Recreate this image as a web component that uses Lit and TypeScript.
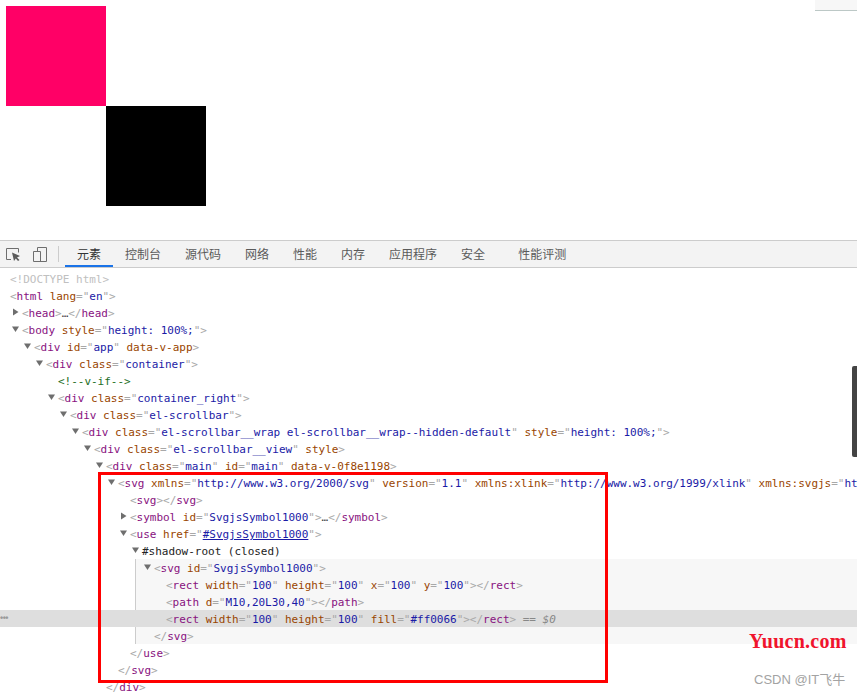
import { LitElement, html, css, nothing } from "lit";
import { customElement } from "lit/decorators.js";

type Attr = [string, string?, boolean?];
interface Row {
  level: number;
  arrow?: "open" | "closed";
  body: unknown;
}

const b = (s: string) => html`<span class="br">${s}</span>`;
const n = (s: string) => html`<span class="tag">${s}</span>`;
const attrs = (list: Attr[]) =>
  list.map(
    ([k, v, link]) => html` <span class="an">${k}</span>${v === undefined
        ? nothing
        : html`<span class="br">="</span><span class="av ${link ? "link" : ""}">${v}</span><span class="br">"</span>`}`
  );
const open = (name: string, list: Attr[] = []) => html`${b("<")}${n(name)}${attrs(list)}${b(">")}`;
const close = (name: string) => html`${b("</")}${n(name)}${b(">")}`;

const TABS = ["元素", "控制台", "源代码", "网络", "性能", "内存", "应用程序", "安全", "性能评测"];

const TOP: Row[] = [
  { level: 0, body: html`<span class="doctype">&lt;!DOCTYPE html&gt;</span>` },
  { level: 0, body: open("html", [["lang", "en"]]) },
  { level: 1, arrow: "closed", body: html`${open("head")}<span class="ell">…</span>${close("head")}` },
  { level: 1, arrow: "open", body: open("body", [["style", "height: 100%;"]]) },
  { level: 2, arrow: "open", body: open("div", [["id", "app"], ["data-v-app"]]) },
  { level: 3, arrow: "open", body: open("div", [["class", "container"]]) },
  { level: 4, body: html`<span class="comment">&lt;!--v-if--&gt;</span>` },
  { level: 4, arrow: "open", body: open("div", [["class", "container_right"]]) },
  { level: 5, arrow: "open", body: open("div", [["class", "el-scrollbar"]]) },
  {
    level: 6,
    arrow: "open",
    body: open("div", [
      ["class", "el-scrollbar__wrap el-scrollbar__wrap--hidden-default"],
      ["style", "height: 100%;"],
    ]),
  },
  { level: 7, arrow: "open", body: open("div", [["class", "el-scrollbar__view"], ["style"]]) },
  { level: 8, arrow: "open", body: open("div", [["class", "main"], ["id", "main"], ["data-v-0f8e1198"]]) },
  {
    level: 9,
    arrow: "open",
    body: html`${b("<")}${n("svg")}${attrs([
      ["xmlns", "http://www.w3.org/2000/svg"],
      ["version", "1.1"],
      ["xmlns:xlink", "http://www.w3.org/1999/xlink"],
    ])} <span class="an">xmlns:svgjs</span>${b('="')}<span class="av">ht</span>`,
  },
  { level: 10, body: html`${open("svg")}${close("svg")}` },
  {
    level: 10,
    arrow: "closed",
    body: html`${open("symbol", [["id", "SvgjsSymbol1000"]])}<span class="ell">…</span>${close("symbol")}`,
  },
  { level: 10, arrow: "open", body: open("use", [["href", "#SvgjsSymbol1000", true]]) },
  { level: 11, arrow: "open", body: html`<span class="shadow-label">#shadow-root (closed)</span>` },
];

const SHADOW: (Row & { selected?: boolean })[] = [
  { level: 12, arrow: "open", body: open("svg", [["id", "SvgjsSymbol1000"]]) },
  {
    level: 13,
    body: html`${open("rect", [["width", "100"], ["height", "100"], ["x", "100"], ["y", "100"]])}${close("rect")}`,
  },
  { level: 13, body: html`${open("path", [["d", "M10,20L30,40"]])}${close("path")}` },
  {
    level: 13,
    selected: true,
    body: html`${open("rect", [["width", "100"], ["height", "100"], ["fill", "#ff0066"]])}${close(
      "rect"
    )}<span class="eq"> == <i>$0</i></span>`,
  },
  { level: 12, body: close("svg") },
];

const BOTTOM: Row[] = [
  { level: 10, body: close("use") },
  { level: 9, body: close("svg") },
  { level: 8, body: close("div") },
];

const SHADOW_LEFT = 136;

@customElement("app-root")
export class AppRoot extends LitElement {
  static styles = css`
    :host {
      display: block;
      position: relative;
      width: 859px;
      height: 695px;
      overflow: hidden;
      background: #fff;
    }
    .page {
      width: 857px;
    }
    .preview {
      height: 240px;
      display: flex;
      justify-content: space-between;
      align-items: flex-start;
    }
    .canvas {
      display: block;
      margin: 6px 0 0 6px;
    }
    .corner {
      width: 42px;
      height: 10px;
      background: #f7f7f7;
      border-bottom: 1px solid #bcc8c6;
    }
    .toolbar {
      box-sizing: border-box;
      height: 28px;
      display: flex;
      align-items: stretch;
      background: #f3f3f3;
      border-top: 1px solid #ccc;
      border-bottom: 1px solid #ccc;
    }
    .tool {
      display: block;
      flex: none;
      align-self: center;
    }
    .t1 {
      margin-left: 5px;
    }
    .t2 {
      margin-left: 11px;
    }
    .divider {
      width: 1px;
      height: 16px;
      background: #ccc;
      align-self: center;
      margin: 0 6px 0 10px;
    }
    .tab {
      padding: 0 12px;
      font: 12px/26px "Noto Sans CJK SC", sans-serif;
      color: #5a5a5a;
      white-space: nowrap;
    }
    .tab.active {
      color: #333;
      box-shadow: inset 0 -2px 0 #1a73e8;
    }
    .tab.last {
      margin-left: 9px;
    }
    .dom {
      padding-top: 2px;
      font: 11px/17px "DejaVu Sans Mono", monospace;
      letter-spacing: -0.02px;
      color: #222;
    }
    .row {
      height: 17px;
      white-space: nowrap;
      display: flex;
      align-items: flex-start;
      position: relative;
    }
    .row-text {
      white-space: pre;
      padding-top: 1px;
    }
    .arrow {
      flex: none;
      width: 12px;
      margin-left: -12px;
      margin-top: 3px;
      display: block;
    }
    .shadow {
      margin-left: 135px;
      border-left: 1px solid #ccc;
      background: #f7f7f7;
    }
    .row.selected {
      margin-left: -136px;
      background: #dedede;
    }
    .dots {
      position: absolute;
      left: 0;
      top: 0;
      font: bold 9px/16px "Liberation Sans", sans-serif;
      color: #999;
      letter-spacing: -0.5px;
    }
    .doctype {
      color: #c0c0c0;
    }
    .br {
      color: #a8a8a8;
    }
    .tag {
      color: #881280;
    }
    .an {
      color: #994500;
    }
    .av {
      color: #1a1aa6;
    }
    .link {
      text-decoration: underline;
    }
    .comment {
      color: #236e25;
    }
    .ell {
      color: #444;
    }
    .shadow-label {
      color: #222;
    }
    .eq {
      color: #888;
    }
    .thumb {
      position: absolute;
      left: 852px;
      top: 366px;
      width: 5px;
      height: 91px;
      background: #444;
      border-radius: 2px 0 0 2px;
    }
    .highlight {
      position: absolute;
      box-sizing: border-box;
      left: 98px;
      top: 472px;
      width: 510px;
      height: 211px;
      border: 3px solid #f00;
    }
    .brand {
      position: absolute;
      left: 749px;
      top: 629px;
      font: bold 20px/24px "Liberation Serif", serif;
      letter-spacing: 0.25px;
      color: #f0142d;
    }
    .credit {
      position: absolute;
      left: 754px;
      top: 671px;
      font: 13px/18px "Liberation Sans", "Noto Sans CJK SC", sans-serif;
      color: #a3a3a3;
    }
  `;

  private arrow(kind?: "open" | "closed") {
    if (!kind) return nothing;
    const points = kind === "open" ? "2,2.5 9,2.5 5.5,8" : "3,1.5 3,8.5 8.5,5";
    return html`<svg class="arrow" width="12" height="12" viewBox="0 0 12 12">
      <polygon points=${points} fill="#6e6e6e"></polygon>
    </svg>`;
  }

  private row(r: Row, offset = 0) {
    const pad = 10 + 12 * r.level - offset;
    return html`<div class="row" style="padding-left:${pad}px">
      ${this.arrow(r.arrow)}<span class="row-text">${r.body}</span>
    </div>`;
  }

  render() {
    return html`
      <div class="page">
        <div class="preview">
          <svg class="canvas" width="200" height="200" viewBox="0 0 200 200">
            <rect width="100" height="100" fill="#ff0066"></rect>
            <rect width="100" height="100" x="100" y="100" fill="#000"></rect>
          </svg>
          <div class="corner"></div>
        </div>
        <div class="toolbar">
          <svg class="tool t1" width="16" height="16" viewBox="0 0 16 16" fill="none">
            <path d="M6 13.5H1.5V2.5H13.5V6.5" stroke="#6e6e6e" stroke-width="1"></path>
            <path d="M7 6.5L15 10L12 11.5L14.5 14L13 15L10.8 12.5L9 15Z" fill="#5a5a5a"></path>
          </svg>
          <svg class="tool t2" width="16" height="16" viewBox="0 0 16 16" fill="none" stroke="#6e6e6e">
            <path d="M5.5 5.5V1.5H14.5V15.5H1.5V5.5H8.5V15.5"></path>
          </svg>
          <div class="divider"></div>
          ${TABS.map(
            (t, i) =>
              html`<div class="tab ${i === 0 ? "active" : ""} ${i === TABS.length - 1 ? "last" : ""}">${t}</div>`
          )}
        </div>
        <div class="dom">
          ${TOP.map((r) => this.row(r))}
          <div class="shadow">
            ${SHADOW.map((r) =>
              r.selected
                ? html`<div class="row selected" style="padding-left:${10 + 12 * r.level}px">
                    <span class="dots">•••</span><span class="row-text">${r.body}</span>
                  </div>`
                : this.row(r, SHADOW_LEFT)
            )}
          </div>
          ${BOTTOM.map((r) => this.row(r))}
        </div>
      </div>
      <div class="thumb"></div>
      <div class="highlight"></div>
      <div class="brand">Yuucn.com</div>
      <div class="credit">CSDN @IT飞牛</div>
    `;
  }
}
